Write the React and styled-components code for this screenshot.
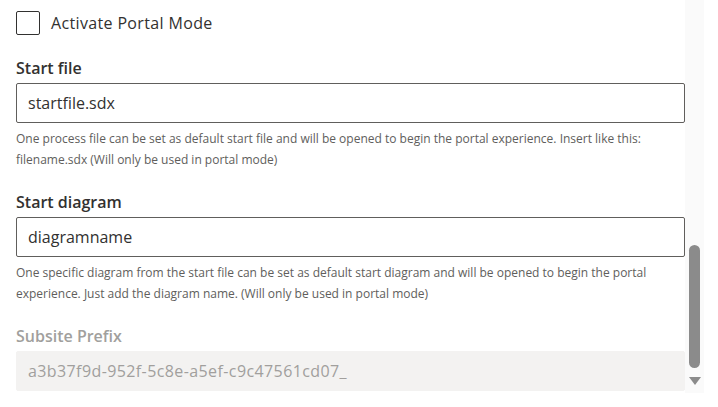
import React from 'react'
import styled, { createGlobalStyle } from 'styled-components'

const GlobalStyle = createGlobalStyle`
  html, body {
    margin: 0;
    padding: 0;
    background: #fff;
  }
  body {
    font-family: "Open Sans", "Noto Sans", sans-serif;
    color: #323130;
  }
`

const fields = [
  {
    id: 'startFile',
    label: 'Start file',
    value: 'startfile.sdx',
    description:
      'One process file can be set as default start file and will be opened to begin the portal experience. Insert like this: filename.sdx (Will only be used in portal mode)',
  },
  {
    id: 'startDiagram',
    label: 'Start diagram',
    value: 'diagramname',
    description:
      'One specific diagram from the start file can be set as default start diagram and will be opened to begin the portal experience. Just add the diagram name. (Will only be used in portal mode)',
  },
  {
    id: 'subsitePrefix',
    label: 'Subsite Prefix',
    value: 'a3b37f9d-952f-5c8e-a5ef-c9c47561cd07_',
    disabled: true,
  },
]

function App() {
  return (
    <>
      <GlobalStyle />
      <Frame>
        <Content>
          <CheckboxRow>
            <CheckBox type="checkbox" />
            <CheckLabel>Activate Portal Mode</CheckLabel>
          </CheckboxRow>
          {fields.map(field => (
            <Field key={field.id}>
              <Label htmlFor={field.id} $disabled={field.disabled}>{field.label}</Label>
              <Input
                id={field.id}
                defaultValue={field.value}
                disabled={field.disabled}
                readOnly
              />
              {field.description && <Description>{field.description}</Description>}
            </Field>
          ))}
        </Content>
        <ScrollTrack>
          <Thumb />
          <ArrowDown />
        </ScrollTrack>
      </Frame>
    </>
  )
}

export default App

const Frame = styled.div`
  display: flex;
  width: 704px;
  height: 393px;
  overflow: hidden;
`

const Content = styled.div`
  flex: 1;
  min-width: 0;
  padding: 11px 0 0 16px;
  display: flex;
  flex-direction: column;
`

const CheckboxRow = styled.label`
  display: flex;
  align-items: center;
  gap: 11px;
  margin-bottom: 22px;
  cursor: pointer;
`

const CheckBox = styled.input`
  appearance: none;
  margin: 0;
  width: 24px;
  height: 24px;
  border: 1px solid #323130;
  border-radius: 2px;
  background: #fff;
  box-sizing: border-box;
`

const CheckLabel = styled.span`
  font-size: 16px;
  line-height: 24px;
  letter-spacing: 0.35px;
`

const Field = styled.div`
  display: flex;
  flex-direction: column;
  margin-bottom: 21px;
`

const Label = styled.label`
  font-size: 16px;
  font-weight: 600;
  line-height: 22px;
  padding-bottom: 4px;
  color: ${p => (p.$disabled ? '#a19f9d' : '#323130')};
`

const Input = styled.input`
  box-sizing: border-box;
  width: 100%;
  height: 40px;
  margin: 0;
  padding: 0 11px;
  font-family: inherit;
  font-size: 16px;
  color: #323130;
  background: #fff;
  border: 1px solid #605e5c;
  border-radius: 2px;
  outline: none;

  &:disabled {
    border-color: #f3f2f1;
    background: #f3f2f1;
    color: #a19f9d;
    letter-spacing: 0.4px;
  }
`

const Description = styled.div`
  padding-top: 5px;
  font-size: 12px;
  line-height: 21px;
  color: #605e5c;
`

const ScrollTrack = styled.div`
  width: 19px;
  flex-shrink: 0;
  background: #fafafa;
  display: flex;
  flex-direction: column;
  align-items: center;
  justify-content: flex-end;
  padding-bottom: 8px;
  box-sizing: border-box;
`

const Thumb = styled.div`
  width: 11px;
  height: 123px;
  margin-bottom: 9px;
  border-radius: 6px;
  background: #8b8b8b;
`

const ArrowDown = styled.div`
  width: 0;
  height: 0;
  border-left: 6px solid transparent;
  border-right: 6px solid transparent;
  border-top: 8px solid #8b8b8b;
`
